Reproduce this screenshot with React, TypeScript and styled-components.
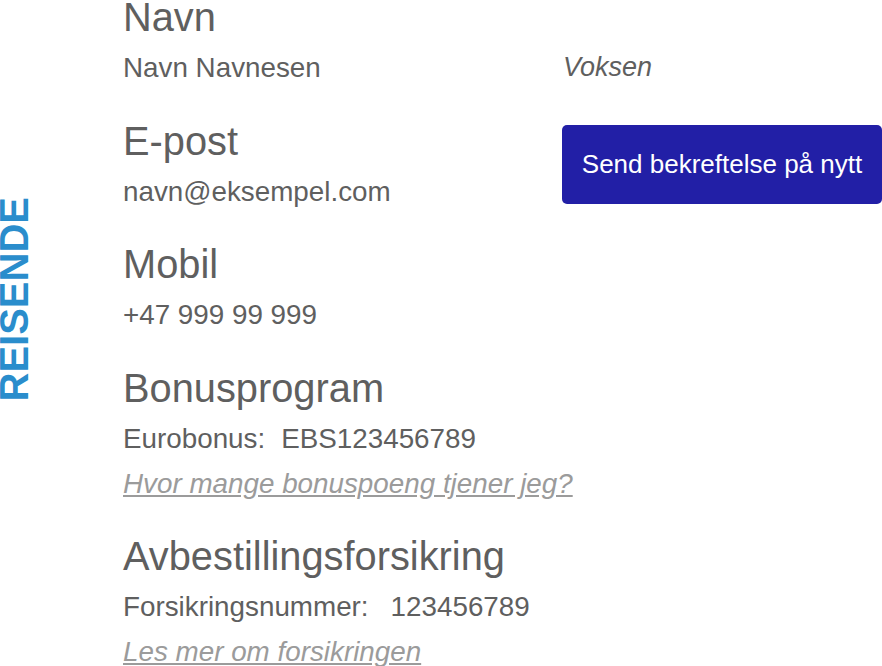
import React from 'react'
import styled, { createGlobalStyle } from 'styled-components'

const GlobalStyle = createGlobalStyle`
  html, body {
    margin: 0;
    padding: 0;
    background: #fff;
  }
  body {
    font-family: "Liberation Sans", Arial, Helvetica, sans-serif;
    color: #5f5f5f;
  }
`

const Page = styled.div`
  display: flex;
  width: 882px;
  height: 100vh;
  overflow: hidden;
`

const SideColumn = styled.div`
  width: 123px;
  flex-shrink: 0;
  padding-top: 197px;
  box-sizing: border-box;
`

const SideLabel = styled.h1`
  margin: 0;
  writing-mode: vertical-rl;
  transform: rotate(180deg);
  font-size: 40px;
  font-weight: 700;
  line-height: 29px;
  color: #2a8dcc;
`

const Content = styled.div`
  display: grid;
  grid-template-columns: 439px 320px;
  grid-auto-rows: min-content;
  row-gap: 34.5px;
  padding-top: 1px;
`

const Section = styled.section`
  display: flex;
  flex-direction: column;
`

const Heading = styled.h2`
  margin: 0 0 12px;
  font-size: 39.8px;
  font-weight: 400;
  line-height: 32px;
`

const Line = styled.p`
  margin: 0;
  font-size: 27.8px;
  line-height: 45px;
  white-space: nowrap;
`

const Value = styled.span<{ $gap: number }>`
  margin-left: ${(p) => p.$gap}px;
`

const InfoLink = styled.a`
  font-size: 27.8px;
  line-height: 45px;
  font-style: italic;
  color: #9b9b9b;
  text-decoration: underline;
  white-space: nowrap;
`

const Aside = styled.div<{ $top?: number }>`
  padding-top: ${(p) => p.$top ?? 0}px;
`

const Tag = styled.span`
  display: block;
  margin-left: 1px;
  font-size: 27px;
  line-height: 45px;
  font-style: italic;
`

const ResendButton = styled.button`
  width: 320px;
  height: 79px;
  padding: 0;
  border: none;
  border-radius: 5px;
  background: #221fa6;
  color: #fff;
  font-family: inherit;
  font-size: 26px;
  cursor: pointer;
`

const App = () => (
  <Page>
    <GlobalStyle />
    <SideColumn>
      <SideLabel>REISENDE</SideLabel>
    </SideColumn>
    <Content>
      <Section>
        <Heading>Navn</Heading>
        <Line>Navn Navnesen</Line>
      </Section>
      <Aside $top={44}>
        <Tag>Voksen</Tag>
      </Aside>

      <Section>
        <Heading>E-post</Heading>
        <Line>navn@eksempel.com</Line>
      </Section>
      <Aside>
        <ResendButton>Send bekreftelse på nytt</ResendButton>
      </Aside>

      <Section>
        <Heading>Mobil</Heading>
        <Line>+47 999 99 999</Line>
      </Section>
      <Aside />

      <Section>
        <Heading>Bonusprogram</Heading>
        <Line>
          Eurobonus:<Value $gap={16}>EBS123456789</Value>
        </Line>
        <InfoLink href="#">Hvor mange bonuspoeng tjener jeg?</InfoLink>
      </Section>
      <Aside />

      <Section>
        <Heading>Avbestillingsforsikring</Heading>
        <Line>
          Forsikringsnummer:<Value $gap={22}>123456789</Value>
        </Line>
        <InfoLink href="#">Les mer om forsikringen</InfoLink>
      </Section>
      <Aside />
    </Content>
  </Page>
)

export default App
